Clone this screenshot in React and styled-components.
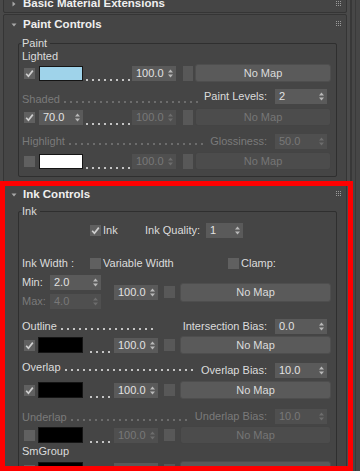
import styled, { createGlobalStyle } from 'styled-components';

export default function App() {
  return (
    <Page>
      <GlobalStyle />
      <Panel>
        <Rollout>
          <RollHead $h={17}>
            <Caret />
            Basic Material Extensions
            <Grip />
          </RollHead>
        </Rollout>

        <Rollout>
          <RollHead>
            <Caret open />
            Paint Controls
            <Grip />
          </RollHead>
          <Group $mt={3} $mb={5} $pb={6}>
            <Legend>Paint</Legend>
            <Row $h={14}>
              <Label>Lighted</Label>
            </Row>
            <PaintMapRow mt={1} checked color="#9fd3ea" />
            <LabelRow
              mt={6}
              drop={3}
              label="Shaded"
              off
              gap={5}
              right="Paint Levels:"
              value="2"
            />
            <PaintMapRow mt={4} checked amount="70.0" dim />
            <LabelRow
              mt={7}
              label="Highlight"
              off
              gap={3}
              right="Glossiness:"
              rightOff
              value="50.0"
            />
            <PaintMapRow mt={3} color="#ffffff" dim />
          </Group>
        </Rollout>

        <Rollout>
          <RollHead>
            <Caret open />
            Ink Controls
            <Grip />
          </RollHead>
          <Group $mt={1} $pb={6}>
            <Legend>Ink</Legend>
            <Row $h={16} $mt={5}>
              <Label $w={68} />
              <Check on />
              <Label $ml={2} $w={42}>
                Ink
              </Label>
              <Label>Ink Quality:</Label>
              <Spinner value="1" w={37} ml={6} />
            </Row>
            <Row $h={14} $mt={18}>
              <Label $w={68}>Ink Width :</Label>
              <Check />
              <Label $ml={2} $w={125}>
                Variable Width
              </Label>
              <Check />
              <Label $ml={2}>Clamp:</Label>
            </Row>
            <Row $h={34} $mt={5}>
              <Column>
                <Row $h={15}>
                  <Label $w={28}>Min:</Label>
                  <Spinner value="2.0" w={51} />
                </Row>
                <Row $h={15} $mt={4}>
                  <Label $w={28} $off>
                    Max:
                  </Label>
                  <Spinner value="4.0" w={51} off />
                </Row>
              </Column>
              <Spinner value="100.0" w={44} ml={13} />
              <MapToggle $w={11} $h={12} $ml={6} />
              <MapButton $w={151} $h={19} $ml={5}>
                No Map
              </MapButton>
            </Row>
            <LabelRow
              mt={9}
              label="Outline"
              gap={29}
              right="Intersection Bias:"
              value="0.0"
            />
            <InkMapRow mt={2} checked />
            <LabelRow
              mt={8}
              drop={-3}
              label="Overlap"
              gap={4}
              right="Overlap Bias:"
              value="10.0"
            />
            <InkMapRow mt={3} checked />
            <LabelRow
              mt={9}
              drop={1}
              label="Underlap"
              off
              gap={4}
              right="Underlap Bias:"
              rightOff
              value="10.0"
            />
            <InkMapRow mt={2} dim />
            <Row $h={12} $mt={1}>
              <Label>SmGroup</Label>
            </Row>
            <InkMapRow mt={4} checked />
          </Group>
        </Rollout>
      </Panel>
      <ScrollTrack />
      <Highlight />
    </Page>
  );
}

function PaintMapRow({ mt, checked, color, amount, dim }) {
  return (
    <Row $h={18} $mt={mt}>
      <Check on={checked} ml={2} />
      {color ? (
        <Swatch $w={44} $h={15} $ml={4} $c={color} />
      ) : (
        <Spinner value={amount} w={44} ml={4} />
      )}
      <Dots $w={44} $ml={3} $bottom />
      <Spinner value="100.0" w={44} ml={2} off={dim} />
      <MapToggle $w={10} $h={15} $ml={7} />
      <MapButton $w={136} $h={18} $ml={2} $off={dim}>
        No Map
      </MapButton>
    </Row>
  );
}

function InkMapRow({ mt, checked, dim }) {
  return (
    <Row $h={18} $mt={mt}>
      <Check on={checked} ml={2} />
      <Swatch $w={45} $h={16} $ml={3} $c="#000000" />
      <Dots $w={20} $ml={7} $bottom />
      <Spinner value="100.0" w={44} ml={4} off={dim} />
      <MapToggle $w={11} $h={12} $ml={6} />
      <MapButton $w={151} $h={18} $ml={5} $off={dim}>
        No Map
      </MapButton>
    </Row>
  );
}

function LabelRow({ mt, label, off, drop = 0, gap, right, rightOff, value }) {
  return (
    <Row $h={16} $mt={mt}>
      <Lead $drop={drop}>
        <Label $off={off}>{label}</Label>
        <Dots $ml={4} $mr={gap} $off={off} />
      </Lead>
      <Label $off={rightOff}>{right}</Label>
      <Spinner value={value} w={52} ml={8} off={rightOff} />
    </Row>
  );
}

function Spinner({ value, w, ml = 0, off }) {
  return (
    <SpinBox $w={w} $ml={ml} $off={off}>
      {value}
      <svg width="5" height="9" viewBox="0 0 5 9">
        <path
          d="M0 3.5 L2.5 0.5 L5 3.5 Z M0 5.5 L5 5.5 L2.5 8.5 Z"
          fill={off ? '#6d6d6d' : '#b9b9b9'}
        />
      </svg>
    </SpinBox>
  );
}

function Check({ on, ml = 0 }) {
  return (
    <CheckBox $ml={ml}>
      {on && (
        <svg width="11" height="11" viewBox="0 0 11 11">
          <path
            d="M2.2 5.8 L4.4 8.2 L8.8 2.6"
            fill="none"
            stroke="#cfcfcf"
            strokeWidth="1.7"
          />
        </svg>
      )}
    </CheckBox>
  );
}

function Caret({ open }) {
  return (
    <CaretSlot>
      <svg width="6" height="6" viewBox="0 0 6 6">
        {open ? (
          <path d="M0.5 1.5 L5.5 1.5 L3 4.5 Z" fill="#a8a8a8" />
        ) : (
          <path d="M1.5 0.5 L4.5 3 L1.5 5.5 Z" fill="#a8a8a8" />
        )}
      </svg>
    </CaretSlot>
  );
}

function Grip() {
  const spots = [0, 2, 4];
  return (
    <GripMark width="5" height="5" viewBox="0 0 5 5">
      {spots.map((x) =>
        spots.map((y) => (
          <rect key={`${x}-${y}`} x={x} y={y} width="1" height="1" fill="#9a9a9a" />
        ))
      )}
    </GripMark>
  );
}

const GlobalStyle = createGlobalStyle`
  html, body {
    margin: 0;
    padding: 0;
    height: 471px;
    overflow: hidden;
    background: #454545;
  }

  body {
    font-family: 'Liberation Sans', Arial, sans-serif;
    font-size: 11px;
    line-height: 13px;
    color: #dcdcdc;
  }

  * {
    box-sizing: border-box;
  }
`;

const Page = styled.div`
  position: relative;
  display: flex;
  height: 471px;
  overflow: hidden;
`;

const Panel = styled.div`
  width: 347px;
  flex-shrink: 0;
  display: flex;
  flex-direction: column;
  gap: 1px;
  margin-top: -6px;
  padding-left: 3px;
  background: #494949;
`;

const ScrollTrack = styled.div`
  flex: 1;
  background: linear-gradient(
    to right,
    #4b4b4b 0 3px,
    #383838 3px 5px,
    #474747 5px 8px,
    #3a3a3a 8px 9px,
    #464646 9px
  );
`;

const Rollout = styled.section`
  background: #454545;
  border: 1px solid #353535;
  border-radius: 2px;
`;

const RollHead = styled.div`
  display: flex;
  align-items: center;
  height: ${({ $h }) => $h || 19}px;
  padding: 0 5px 0 7px;
  font-weight: bold;
  font-size: 11.5px;
  color: #efefef;
  white-space: nowrap;
`;

const CaretSlot = styled.span`
  width: 12px;
  display: flex;
  align-items: center;
`;

const GripMark = styled.svg`
  margin-left: auto;
  align-self: flex-start;
  margin-top: 6px;
`;

const Group = styled.fieldset`
  margin: ${({ $mt }) => $mt || 0}px 9px ${({ $mb }) => $mb || 0}px 14px;
  padding: 0 9px ${({ $pb }) => $pb || 0}px 3px;
  border: 1px solid #2f2f2f;
  border-radius: 2px;
  min-width: 0;
`;

const Legend = styled.legend`
  padding: 0 3px 0 0;
  line-height: 12px;
  color: #dcdcdc;
`;

const Row = styled.div`
  display: flex;
  align-items: center;
  height: ${({ $h }) => $h}px;
  margin-top: ${({ $mt }) => $mt || 0}px;
`;

const Column = styled.div`
  display: flex;
  flex-direction: column;
  width: 79px;
  flex-shrink: 0;
`;

const Lead = styled.div`
  flex: 1;
  min-width: 0;
  display: flex;
  align-items: baseline;
  padding-top: ${({ $drop }) => ($drop > 0 ? $drop * 2 : 0)}px;
  padding-bottom: ${({ $drop }) => ($drop < 0 ? -$drop * 2 : 0)}px;
`;

const Label = styled.span`
  flex-shrink: 0;
  white-space: nowrap;
  width: ${({ $w }) => ($w ? `${$w}px` : 'auto')};
  margin-left: ${({ $ml }) => $ml || 0}px;
  color: ${({ $off }) => ($off ? '#7a7a7a' : '#dcdcdc')};
`;

const Dots = styled.span`
  flex: ${({ $w }) => ($w ? `0 0 ${$w}px` : '1 1 auto')};
  height: 2px;
  margin-left: ${({ $ml }) => $ml || 0}px;
  margin-right: ${({ $mr }) => $mr || 0}px;
  align-self: ${({ $bottom }) => ($bottom ? 'flex-end' : 'auto')};
  margin-bottom: ${({ $bottom }) => ($bottom ? 1 : 0)}px;
  background: linear-gradient(
      to right,
      ${({ $off }) => ($off ? '#6c6c6c' : '#c4c4c4')} 0 2px,
      transparent 2px
    )
    left top / 6px 2px repeat-x;
`;

const SpinBox = styled.div`
  flex-shrink: 0;
  display: flex;
  align-items: center;
  justify-content: space-between;
  width: ${({ $w }) => $w}px;
  height: 15px;
  margin-left: ${({ $ml }) => $ml}px;
  padding: 0 3px 0 4px;
  background: ${({ $off }) => ($off ? '#4f4f4f' : '#5a5a5a')};
  color: ${({ $off }) => ($off ? '#787878' : '#e2e2e2')};
`;

const CheckBox = styled.span`
  flex-shrink: 0;
  display: flex;
  width: 11px;
  height: 11px;
  margin-left: ${({ $ml }) => $ml}px;
  background: #606060;
`;

const Swatch = styled.span`
  flex-shrink: 0;
  width: ${({ $w }) => $w}px;
  height: ${({ $h }) => $h}px;
  margin-left: ${({ $ml }) => $ml}px;
  background: ${({ $c }) => $c};
  border: 1px solid #151515;
`;

const MapToggle = styled.span`
  flex-shrink: 0;
  width: ${({ $w }) => $w}px;
  height: ${({ $h }) => $h}px;
  margin-left: ${({ $ml }) => $ml}px;
  background: #585858;
`;

const MapButton = styled.button`
  flex-shrink: 0;
  width: ${({ $w }) => $w}px;
  height: ${({ $h }) => $h}px;
  margin: 0 0 0 ${({ $ml }) => $ml}px;
  padding: 0;
  font-family: inherit;
  font-size: 11px;
  background: ${({ $off }) => ($off ? '#4c4c4c' : '#5a5a5a')};
  color: ${({ $off }) => ($off ? '#767676' : '#dcdcdc')};
  border: 1px solid ${({ $off }) => ($off ? '#444444' : '#4e4e4e')};
  border-radius: 3px;
`;

const Highlight = styled.div`
  position: absolute;
  left: 0;
  top: 181px;
  width: 353px;
  height: 290px;
  border: 5px solid #fe0000;
  pointer-events: none;
`;
